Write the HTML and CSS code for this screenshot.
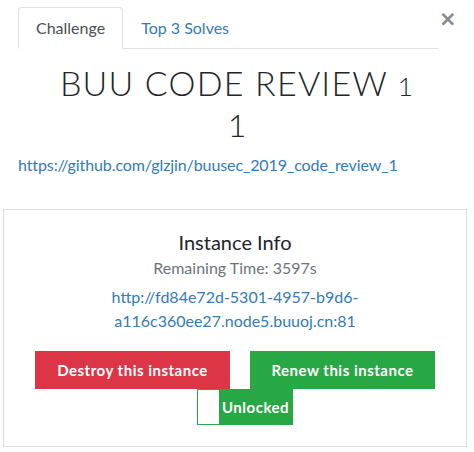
FILE: index.html
```html
<!DOCTYPE html>
<html>
<head>
<meta charset="utf-8">
<link rel="stylesheet" href="styles.css">
</head>
<body>
<div class="modal">
  <div class="head">
    <ul class="tabs">
      <li class="tab active">Challenge</li>
      <li class="tab">Top 3 Solves</li>
    </ul>
    <span class="close">×</span>
  </div>
  <h3 class="title">BUU CODE REVIEW <span class="onum">1</span></h3>
  <h4 class="value">1</h4>
  <p class="desc"><a href="#">https://github.com/glzjin/buusec_2019_code_review_1</a></p>
  <div class="instance">
    <h4 class="inst-title">Instance Info</h4>
    <div class="remaining">Remaining Time: 3597s</div>
    <div class="url"><a href="#">http://fd84e72d-5301-4957-b9d6-<br>a116c360ee27.node5.buuoj.cn:81</a></div>
    <div class="actions">
      <button class="btn danger">Destroy this instance</button>
      <button class="btn success">Renew this instance</button>
    </div>
    <div class="toggle-row">
      <div class="toggle"><span class="knob"></span><span class="on">Unlocked</span></div>
    </div>
  </div>
</div>
</body>
</html>
```
FILE: styles.css
```css
* { box-sizing: border-box; }
body {
  margin: 0;
  background: #fff;
  font-family: Lato, "Open Sans", sans-serif;
  color: #212529;
  width: 474px;
  height: 452px;
  overflow: hidden;
}
a { color: #337ab7; text-decoration: none; }
.modal { padding-top: 7px; }
.head {
  display: flex;
  align-items: flex-start;
}
.tabs {
  list-style: none;
  margin: 0 0 0 18px;
  padding: 0;
  width: 420px;
  display: flex;
  border-bottom: 1px solid #dee2e6;
}
.tab {
  font-size: 16px;
  line-height: 24px;
  padding: 8px 17px 8px 17px;
  color: #337ab7;
  border: 1px solid transparent;
  border-radius: 4px 4px 0 0;
  margin-bottom: -1px;
}
.tab.active {
  color: #495057;
  border-color: #dee2e6 #dee2e6 #fff;
  background: #fff;
}
.close {
  font-size: 21px;
  font-weight: 700;
  line-height: 14px;
  color: #888;
  margin: 5px 0 0 1px;
  font-family: "DejaVu Sans", sans-serif;
}
.title {
  margin: 14px 0 0;
  text-align: center;
  font-weight: 300;
  font-size: 34px;
  line-height: 40px;
  letter-spacing: 1.2px;
}
.onum { font-size: 26px; }
.value {
  margin: -1px 0 0;
  text-align: center;
  font-weight: 300;
  font-size: 32px;
  line-height: 40px;
}
.desc {
  margin: 8px 0 0 18px;
  font-size: 16px;
  line-height: 24px;
  letter-spacing: -0.1px;
}
.instance {
  margin: 32px 0 0 3px;
  width: 464px;
  height: 238px;
  border: 1px solid #ddd;
  padding-top: 18px;
  text-align: center;
}
.inst-title {
  margin: 0;
  font-size: 20px;
  font-weight: 400;
  line-height: 28px;
}
.remaining {
  color: #6c757d;
  font-size: 16px;
  line-height: 24px;
  margin-top: 0;
}
.url {
  font-size: 16px;
  line-height: 24px;
  margin-top: 5px;
}
.actions {
  display: flex;
  justify-content: center;
  gap: 20px;
  margin-top: 18px;
}
.btn {
  border: 0;
  border-radius: 0;
  color: #fff;
  font-family: Lato, sans-serif;
  font-weight: 700;
  font-size: 15px;
  letter-spacing: 0.5px;
  height: 38px;
  padding: 0;
}
.danger { background: #dc3545; width: 195px; }
.success { background: #28a745; width: 185px; }
.toggle-row {
  display: flex;
  justify-content: center;
}
.toggle {
  display: flex;
  height: 36px;
  width: 96px;
  margin-left: 20px;
  border: 1px solid #28a745;
}
.knob { width: 21px; background: #fff; }
.on {
  flex: 1;
  background: #28a745;
  color: #fff;
  font-weight: 700;
  font-size: 15px;
  letter-spacing: 0.5px;
  line-height: 34px;
}
```
